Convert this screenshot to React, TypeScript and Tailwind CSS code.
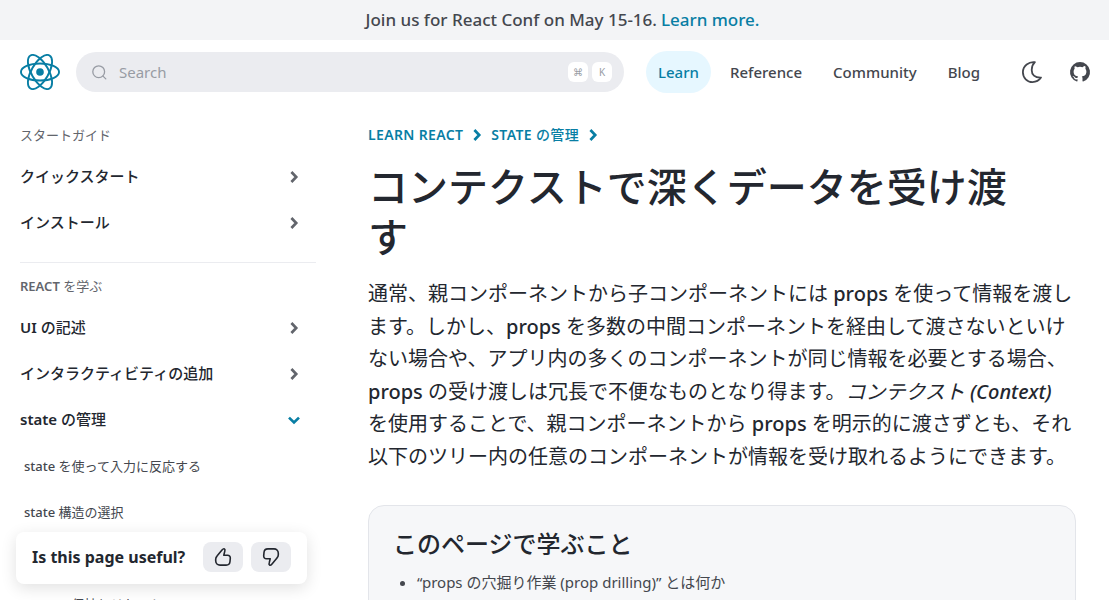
import React from 'react';

const fontStack = "font-['Noto_Sans','Noto_Sans_CJK_JP',sans-serif]";

function ReactLogo() {
  return (
    <svg viewBox="-10.5 -9.45 21 18.9" fill="none" className="h-9 w-10 text-[#087ea4]" aria-hidden="true">
      <circle r="2" fill="currentColor" />
      <g stroke="currentColor" strokeWidth="1">
        <ellipse rx="10" ry="4.5" />
        <ellipse rx="10" ry="4.5" transform="rotate(60)" />
        <ellipse rx="10" ry="4.5" transform="rotate(120)" />
      </g>
    </svg>
  );
}

function Chevron({ down = false, className = '' }: { down?: boolean; className?: string }) {
  return (
    <svg viewBox="0 0 20 20" fill="none" stroke="currentColor" strokeWidth="2.7" className={`size-5 shrink-0 ${className}`} aria-hidden="true">
      <path d={down ? 'M5 7.6 10 12.4 15 7.6' : 'M7.4 5 12.2 10 7.4 15'} />
    </svg>
  );
}

function SearchIcon() {
  return (
    <svg viewBox="0 0 20 20" fill="none" stroke="currentColor" strokeWidth="1.3" strokeLinecap="round" className="size-5 shrink-0 text-[#989ca4]" aria-hidden="true">
      <circle cx="8.7" cy="9.7" r="5.9" />
      <path d="m13 14.1 2.8 2.8" />
    </svg>
  );
}

function MoonIcon() {
  return (
    <svg viewBox="0 0 24 24" fill="none" stroke="currentColor" strokeWidth="1.8" strokeLinejoin="round" className="size-6" aria-hidden="true">
      <path d="M14.9 2.2C9 1.4 2.9 5.7 2.9 12.2c0 5.7 4.3 9.9 9.6 9.9 3.5 0 6.6-1.6 8.5-4.5-6.4.2-9.3-3-9.300-7.600 0-3.200 1.200-5.900 3.200-7.800Z" />
    </svg>
  );
}

function GithubIcon() {
  return (
    <svg viewBox="-2 -2 24 24" fill="currentColor" className="size-6" aria-hidden="true">
      <path d="M10 0a10 10 0 0 0-3.16 19.49c.5.1.68-.22.68-.48l-.01-1.7c-2.78.6-3.37-1.34-3.37-1.34-.46-1.16-1.11-1.47-1.11-1.47-.9-.62.07-.6.07-.6 1 .07 1.53 1.03 1.53 1.03.9 1.52 2.34 1.08 2.91.83.1-.65.35-1.09.63-1.34-2.22-.25-4.55-1.11-4.55-4.94 0-1.1.39-1.99 1.03-2.69a3.6 3.6 0 0 1 .1-2.64s.84-.27 2.75 1.02a9.58 9.58 0 0 1 5 0c1.91-1.3 2.75-1.02 2.75-1.02.55 1.37.2 2.4.1 2.64.64.7 1.03 1.6 1.03 2.69 0 3.84-2.34 4.68-4.57 4.93.36.31.68.92.68 1.85l-.01 2.75c0 .26.18.58.69.48A10 10 0 0 0 10 0" />
    </svg>
  );
}

function ThumbIcon({ down = false }: { down?: boolean }) {
  return (
    <svg viewBox="0 0 20 20" fill="none" stroke="currentColor" strokeWidth="1.6" strokeLinejoin="round" strokeLinecap="round" className={`size-5 ${down ? 'rotate-180' : ''}`} aria-hidden="true">
      <path d="M10.800 8.200h3.800a2.700 2.700 0 0 1 2.700 2.900l-.3 3.400a3.900 3.900 0 0 1-3.900 3.600H7a4.300 4.300 0 0 1-4.300-4.300v-1.500c0-1.200.5-2.300 1.300-3.200l5-6c.8-1 1.800-1.500 2.400-1.200.6.4.7 1.300.4 2.200Z" />
    </svg>
  );
}

function NavLink({ label, active = false }: { label: string; active?: boolean }) {
  return (
    <a href="#" className={`flex h-[42px] items-center rounded-full px-3 text-[15px] leading-6 font-medium ${active ? 'bg-[#e6f7ff] text-[#087ea4]' : 'text-[#44474e]'}`}>
      {label}
    </a>
  );
}

function SideHeading({ children }: { children: React.ReactNode }) {
  return <h3 className="px-5 text-[13px] leading-5 text-[#62656c]">{children}</h3>;
}

function SideItem({ children, open = false }: { children: React.ReactNode; open?: boolean }) {
  return (
    <li>
      <a href="#" className="flex h-[46px] items-center justify-between pr-3 pl-5 text-[15px] leading-5 font-medium text-[#23272f]">
        <span className="pb-0.5">{children}</span>
        <Chevron down={open} className={open ? 'text-[#087ea4]' : 'text-[#62656c]'} />
      </a>
    </li>
  );
}

function SubItem({ children }: { children: React.ReactNode }) {
  return (
    <li>
      <a href="#" className="flex h-[46px] items-center pl-6 text-[13px] leading-5 text-[#44474e]">
        <span>{children}</span>
      </a>
    </li>
  );
}

function Latin({ children }: { children: React.ReactNode }) {
  return <span className="font-medium">{children}</span>;
}

function Strong({ children }: { children: React.ReactNode }) {
  return <span className="font-semibold">{children}</span>;
}

export default function App() {
  return (
    <div lang="ja" className={`flex h-screen flex-col overflow-hidden bg-white text-[#23272f] antialiased ${fontStack}`}>
      <div className="flex h-10 shrink-0 items-center justify-center gap-1 bg-[#f3f4f6] pl-4 text-[17px] font-medium text-[#44474e]">
        Join us for React Conf on May 15-16.
        <a href="#" className="text-[#087ea4]">Learn more.</a>
      </div>

      <header className="flex h-16 shrink-0 items-center pr-[17px] pl-5">
        <a href="#" aria-label="React"><ReactLogo /></a>
        <label className="ml-4 flex h-10 flex-1 items-center rounded-full bg-[#ebecf0] pr-3 pl-[14px]">
          <SearchIcon />
          <input type="search" aria-label="Search" placeholder="Search" className="ml-[9px] min-w-0 flex-1 bg-transparent text-[15px] outline-none placeholder:text-[#989ca4]" />
          <span className="flex gap-1 text-[10px] text-[#989ca4]">
            <kbd className="flex size-5 items-center justify-center rounded-md bg-white font-['DejaVu_Sans',sans-serif]">⌘</kbd>
            <kbd className="flex size-5 items-center justify-center rounded-md bg-white font-['Noto_Sans',sans-serif]">K</kbd>
          </span>
        </label>
        <nav className="ml-[22px] flex gap-[7px]">
          <NavLink label="Learn" active />
          <NavLink label="Reference" />
          <NavLink label="Community" />
          <NavLink label="Blog" />
        </nav>
        <div className="ml-7 flex gap-6 text-[#44474e]">
          <button type="button" aria-label="Use Dark Mode"><MoonIcon /></button>
          <a href="#" aria-label="Open on GitHub"><GithubIcon /></a>
        </div>
      </header>

      <div className="flex min-h-0 flex-1">
        <aside className="relative w-[316px] shrink-0 pt-[21px]">
          <SideHeading>スタートガイド</SideHeading>
          <ul className="mt-[9px]">
            <SideItem>クイックスタート</SideItem>
            <SideItem>インストール</SideItem>
          </ul>
          <hr className="mt-4 mb-[13px] ml-5 border-[#ebecf0]" />
          <SideHeading><Strong>REACT</Strong> を学ぶ</SideHeading>
          <ul className="mt-[9px]">
            <SideItem><Strong>UI</Strong> の記述</SideItem>
            <SideItem>インタラクティビティの追加</SideItem>
            <SideItem open><Strong>state</Strong> の管理</SideItem>
            <SubItem><Latin>state</Latin> を使って入力に反応する</SubItem>
            <SubItem><Latin>state</Latin> 構造の選択</SubItem>
            <SubItem>コンポーネント間で <Latin>state</Latin> を共有する</SubItem>
            <SubItem><Latin>state</Latin> の保持とリセット</SubItem>
          </ul>
          <div className="absolute bottom-4 left-4 flex h-[52px] items-center gap-2 rounded-lg bg-white px-4 pb-0.5 shadow-[0_4px_16px_rgba(0,0,0,0.12)]">
            <span className="mr-[10px] text-base font-bold whitespace-nowrap">Is this page useful?</span>
            <button type="button" aria-label="Yes" className="flex h-[30px] w-10 items-center justify-center rounded-lg bg-[#ebecf0]"><ThumbIcon /></button>
            <button type="button" aria-label="No" className="flex h-[30px] w-10 items-center justify-center rounded-lg bg-[#ebecf0]"><ThumbIcon down /></button>
          </div>
        </aside>

        <main className="min-w-0 flex-1 pt-[21px] pr-[33px] pl-[52px]">
          <nav aria-label="Breadcrumb" className="flex items-center gap-1 text-sm leading-5 font-medium tracking-wide text-[#087ea4]">
            <a href="#"><Strong>LEARN REACT</Strong></a>
            <Chevron />
            <a href="#"><Strong>STATE</Strong> の管理</a>
            <Chevron />
          </nav>
          <h1 className="mt-[17px] max-w-[672px] text-[40px] leading-[50px] font-medium">コンテクストで深くデータを受け渡す</h1>
          <p className="mt-4 text-xl leading-relaxed">
            通常、親コンポーネントから子コンポーネントには <Latin>props</Latin> を使って情報を渡します。しかし、<Latin>props</Latin> を多数の中間コンポーネントを経由して渡さないといけない場合や、アプリ内の多くのコンポーネントが同じ情報を必要とする場合、<Latin>props</Latin> の受け渡しは冗長で不便なものとなり得ます。<em>コンテクスト <Latin>(Context)</Latin></em> を使用することで、親コンポーネントから <Latin>props</Latin> を明示的に渡さずとも、それ以下のツリー内の任意のコンポーネントが情報を受け取れるようにできます。
          </p>
          <section className="mt-8 rounded-2xl border border-[#e3e5ea] bg-[#f6f7f9] px-6 pt-5 pb-8">
            <h2 className="text-2xl leading-9 font-medium">このページで学ぶこと</h2>
            <ul className="mt-2 list-disc space-y-2 pl-6 text-[15px] leading-6 text-[#44474e]">
              <li>“props の穴掘り作業 (prop drilling)” とは何か</li>
              <li>コンテクストを使って props の冗長な受け渡しを置き換える方法</li>
            </ul>
          </section>
        </main>
      </div>
    </div>
  );
}
